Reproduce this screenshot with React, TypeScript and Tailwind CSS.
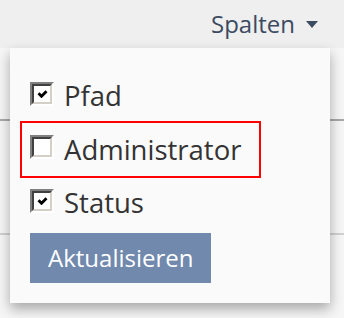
import React from "react";

type Column = { key: string; label: string; checked: boolean; highlight?: boolean };

const columns: Column[] = [
  { key: "path", label: "Pfad", checked: true },
  { key: "admin", label: "Administrator", checked: false, highlight: true },
  { key: "status", label: "Status", checked: true },
];

function ClassicCheckbox({ checked }: { checked: boolean }) {
  return (
    <span className="flex h-[24px] w-[24px] shrink-0 border-2 border-t-[#808080] border-l-[#808080] border-b-[#ffffff] border-r-[#ffffff]">
      <span className="flex flex-1 items-center justify-center border-2 border-t-[#404040] border-l-[#404040] border-b-[#d4d0c8] border-r-[#d4d0c8] bg-white">
        {checked && (
          <svg width="11" height="8" viewBox="0 0 10 8" aria-hidden>
            <polyline points="1,3.2 4,6.3 9,1.2" fill="none" stroke="#000" strokeWidth={2.8} />
          </svg>
        )}
      </span>
    </span>
  );
}

function ColumnRow({ col }: { col: Column }) {
  return (
    <label
      className={
        col.highlight
          ? "flex h-[37px] w-fit items-center gap-[10px] pr-[10px] outline-2 outline-offset-[8px] outline-[#ff0000]"
          : "flex h-[37px] w-fit items-center gap-[10px]"
      }
    >
      <span className="-mt-[4px]">
        <ClassicCheckbox checked={col.checked} />
      </span>
      <span className="text-[27.5px] leading-[37px] text-[#333333]">{col.label}</span>
    </label>
  );
}

export default function App() {
  return (
    <div
      className="relative h-[318px] w-[344px] overflow-hidden bg-[#efefef]"
      style={{ fontFamily: '"Open Sans", "Noto Sans", sans-serif' }}
    >
      <div className="flex h-[48px] items-center justify-end pr-[26px]">
        <button type="button" className="flex items-center gap-[11px] text-[24px] text-[#3c4b61]">
          <span>Spalten</span>
          <svg width="12" height="7" viewBox="0 0 12 7" className="mt-[1px]" aria-hidden>
            <polygon points="0,0 12,0 6,7" fill="#3c4b61" />
          </svg>
        </button>
      </div>

      {/* table behind the dropdown */}
      <div className="bg-[#f6f6f6]">
        <div className="h-[73px] border-b-2 border-[#a8a8a8]" />
        <div className="h-[114px] border-b-2 border-[#d0d0d0]" />
        <div className="h-[64px]" />
        <div className="ml-[112px] h-[3px] w-[170px] bg-[#566a84]" />
        <div className="h-[20px]" />
      </div>

      <div className="absolute left-[10px] top-[48px] flex h-[255px] w-[320px] flex-col bg-[#fafafa] pl-[20px] pt-[29px] shadow-[0_6px_12px_rgba(0,0,0,0.32)]">
        <div className="flex flex-col gap-[16.5px]">
          {columns.map((c) => (
            <ColumnRow key={c.key} col={c} />
          ))}
        </div>
        <button
          type="button"
          className="mt-[12px] h-[50px] w-[181px] bg-[#7089ad] pl-[18px] text-left text-[24px] leading-[50px] text-white"
        >
          Aktualisieren
        </button>
      </div>
    </div>
  );
}
